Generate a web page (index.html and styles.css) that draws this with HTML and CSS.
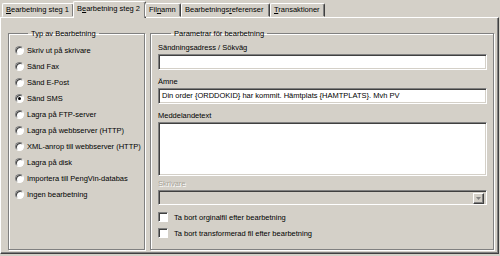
FILE: index.html
```html
<!DOCTYPE html>
<html>
<head>
<meta charset="utf-8">
<link rel="stylesheet" href="styles.css">
</head>
<body>
<div class="dialog">
  <div class="tabs">
    <div class="tab"><u>B</u>earbetning steg 1</div>
    <div class="tab active">B<u>e</u>arbetning steg 2</div>
    <div class="tab">Fil<u>n</u>amn</div>
    <div class="tab">Bearbetnings<u>r</u>eferenser</div>
    <div class="tab"><u>T</u>ransaktioner</div>
  </div>
  <div class="panel">
    <fieldset class="group left">
      <legend>Typ av Bearbetning</legend>
      <div class="radio"><span class="rb"></span>Skriv ut på skrivare</div>
      <div class="radio"><span class="rb"></span>Sänd Fax</div>
      <div class="radio"><span class="rb"></span>Sänd E-Post</div>
      <div class="radio"><span class="rb checked"></span>Sänd SMS</div>
      <div class="radio"><span class="rb"></span>Lagra på FTP-server</div>
      <div class="radio"><span class="rb"></span>Lagra på webbserver (HTTP)</div>
      <div class="radio"><span class="rb"></span>XML-anrop till webbserver (HTTP)</div>
      <div class="radio"><span class="rb"></span>Lagra på disk</div>
      <div class="radio"><span class="rb"></span>Importera till PengVin-databas</div>
      <div class="radio"><span class="rb"></span>Ingen bearbetning</div>
    </fieldset>
    <fieldset class="group right">
      <legend>Parametrar för bearbetning</legend>
      <div class="label">Sändningsadress / Sökväg</div>
      <div class="field"></div>
      <div class="label">Ämne</div>
      <div class="field">Din order {ORDDOKID} har kommit. Hämtplats {HAMTPLATS}. Mvh PV</div>
      <div class="label">Meddelandetext</div>
      <div class="field area"></div>
      <div class="label disabled">Skrivare</div>
      <div class="field combo"><span class="dd"><svg width="5" height="3" viewBox="0 0 5 3"><path d="M0 0h5L2.5 3z" fill="#808080"/></svg></span></div>
      <div class="check"><span class="cb"></span>Ta bort orginalfil efter bearbetning</div>
      <div class="check"><span class="cb"></span>Ta bort transformerad fil efter bearbetning</div>
    </fieldset>
  </div>
</div>
</body>
</html>
```

FILE: styles.css
```css
html, body {
  margin: 0;
  padding: 0;
  background: #d4d0c8;
}
body {
  width: 500px;
  height: 256px;
  overflow: hidden;
  font-family: "Liberation Sans", Arial, sans-serif;
  font-size: 7.5px;
  color: #000;
}
.dialog {
  padding: 1px 1px 0 0;
}
.tabs {
  display: flex;
  height: 16px;
  padding-left: 2px;
  align-items: flex-end;
  position: relative;
  z-index: 2;
}
.tab {
  height: 12px;
  line-height: 12px;
  padding: 0 3px;
  border: 1px solid;
  border-color: #fff #404040 transparent #fff;
  box-shadow: inset -1px 0 #808080;
  border-radius: 2px 2px 0 0;
  white-space: nowrap;
}
.tab u { text-decoration-thickness: 1px; text-underline-offset: 1px; }
.tab:nth-child(1) { width: 64px; }
.tab:nth-child(2) { width: 65px; }
.tab:nth-child(3) { width: 28px; }
.tab:nth-child(4) { width: 81px; }
.tab:nth-child(5) { width: 47px; }
.tab.active {
  height: 15px;
  line-height: 13px;
  margin-bottom: -1px;
  margin-left: -1px;
  margin-right: -1px;
  padding: 0 3px 1px;
  background: #d4d0c8;
  border-bottom: 0;
}
.panel {
  height: 237px;
  border: 1px solid;
  border-color: #fff #404040 #404040 #fff;
  box-shadow: inset -1px -1px #808080;
  display: flex;
  padding: 11px 4px 0 7px;
  gap: 5px;
  box-sizing: border-box;
  width: 499px;
}
.group {
  margin: 0;
  border: 1px solid #808080;
  box-shadow: inset 1px 1px #fff, 1px 1px #fff;
  padding: 0;
  height: 221px;
  box-sizing: border-box;
}
.group legend {
  padding: 0 3px;
  margin-left: 13px;
  line-height: 9px;
}
.left {
  width: 137px;
  padding: 4px 0 0 6px;
}
.radio {
  display: flex;
  align-items: center;
  height: 16px;
  white-space: nowrap;
}
.rb {
  width: 9px;
  height: 9px;
  border-radius: 50%;
  background: #fff;
  box-sizing: border-box;
  border: 1px solid;
  border-color: #808080 #fff #fff #808080;
  box-shadow: inset 1px 1px #404040;
  margin-right: 3px;
  position: relative;
  flex: none;
}
.rb.checked::after {
  content: "";
  position: absolute;
  left: 2px;
  top: 2px;
  width: 3px;
  height: 3px;
  border-radius: 50%;
  background: #000;
}
.right {
  flex: 1;
  padding: 5px 6px 0 7px;
}
.label {
  height: 10px;
  line-height: 10px;
  margin-bottom: 1px;
}
.label.disabled {
  color: #a8a498;
  text-shadow: 1px 1px #fff;
}
.field {
  height: 16px;
  box-sizing: border-box;
  background: #fff;
  border: 1px solid;
  border-color: #808080 #fff #fff #808080;
  box-shadow: inset 1px 1px #404040, inset -1px -1px #d4d0c8;
  padding: 0 3px;
  line-height: 14px;
  margin-bottom: 7px;
  white-space: nowrap;
  overflow: hidden;
}
.field.area {
  height: 54px;
  margin-bottom: 3px;
}
.field.combo {
  height: 15px;
  background: #d4d0c8;
  display: flex;
  justify-content: flex-end;
  padding: 2px;
  margin-bottom: 4px;
}
.dd {
  width: 11px;
  height: 11px;
  box-sizing: border-box;
  border: 1px solid;
  border-color: #fff #404040 #404040 #fff;
  box-shadow: inset -1px -1px #808080;
  display: flex;
  align-items: center;
  justify-content: center;
}
.check {
  display: flex;
  align-items: center;
  height: 16px;
  white-space: nowrap;
}
.cb {
  width: 10px;
  height: 10px;
  box-sizing: border-box;
  background: #fff;
  border: 1px solid;
  border-color: #808080 #fff #fff #808080;
  box-shadow: inset 1px 1px #404040;
  margin-right: 6px;
  flex: none;
}
```
